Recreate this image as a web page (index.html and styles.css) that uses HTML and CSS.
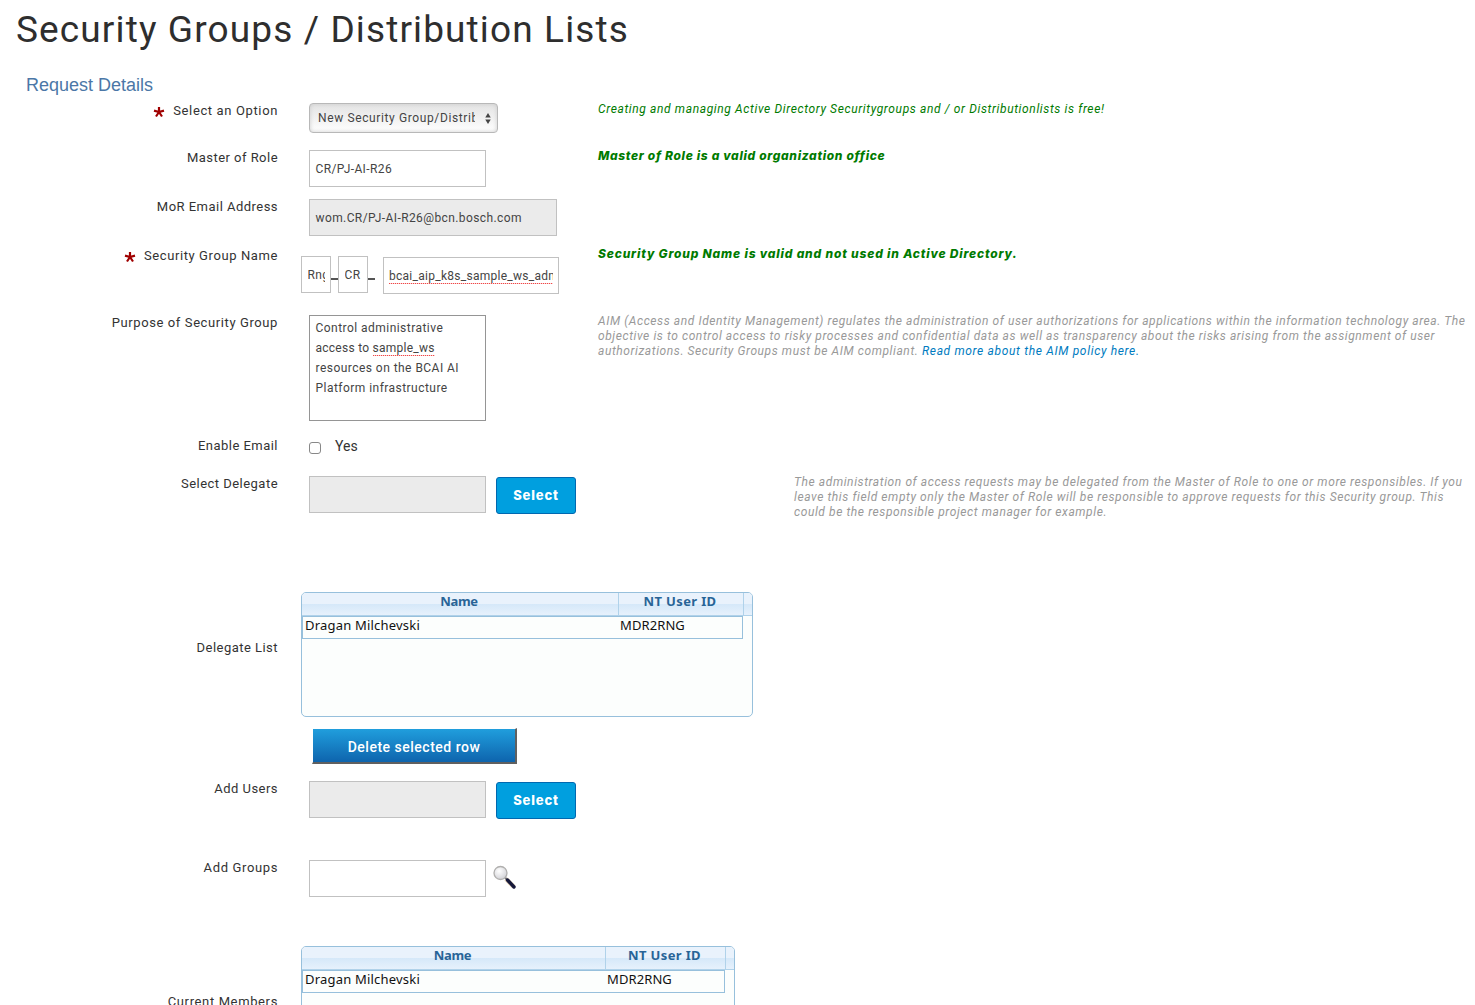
FILE: index.html
```html
<!DOCTYPE html>
<html lang="en">
<head>
<meta charset="utf-8">
<title>Security Groups / Distribution Lists</title>
<link rel="stylesheet" href="styles.css">
</head>
<body>
<h1 class="title">Security Groups / Distribution Lists</h1>
<h2 class="section">Request Details</h2>
<form class="form">
  <div class="row row--option">
    <div class="label"><svg class="star" viewBox="0 0 12 12"><path d="M6 6V1M6 6 1 4.600M6 6l5-1.400M6 6l-3 4.500M6 6l3 4.500"/></svg><span>Select an Option</span></div>
    <div class="field"><div class="select"><span class="select-text">New Security Group/Distrib</span><svg class="arrows" viewBox="0 0 6 12"><path d="M0 5 3 0l3 5zM0 7l3 5 3-5z"/></svg></div></div>
    <div class="hint hint--ok">Creating and managing Active Directory Securitygroups and / or Distributionlists is free!</div>
  </div>
  <div class="row row--role">
    <div class="label"><span>Master of Role</span></div>
    <div class="field"><div class="input">CR/PJ-AI-R26</div></div>
    <div class="hint hint--valid">Master of Role is a valid organization office</div>
  </div>
  <div class="row row--email">
    <div class="label"><span>MoR Email Address</span></div>
    <div class="field"><div class="input input--wide input--off">wom.CR/PJ-AI-R26@bcn.bosch.com</div></div>
  </div>
  <div class="row row--name">
    <div class="label"><svg class="star" viewBox="0 0 12 12"><path d="M6 6V1M6 6 1 4.600M6 6l5-1.400M6 6l-3 4.500M6 6l3 4.500"/></svg><span>Security Group Name</span></div>
    <div class="field field--name"><div class="input input--tiny"><span class="clip">Rng</span></div><i class="dash"></i><div class="input input--tiny"><span class="clip">CR</span></div><i class="dash"></i><div class="input input--group"><span class="clip"><span class="typo">bcai_aip_k8s_sample_ws_adm</span></span></div></div>
    <div class="hint hint--valid hint--name">Security Group Name is valid and not used in Active Directory.</div>
  </div>
  <div class="row row--purpose">
    <div class="label"><span>Purpose of Security Group</span></div>
    <div class="field"><div class="textarea">Control administrative<br><span class="tight">access to <span class="typo">sample_ws</span></span><br>resources on the BCAI AI<br>Platform infrastructure</div></div>
    <div class="hint">AIM (Access and Identity Management) regulates the administration of user authorizations for applications within the information technology area. The<br>objective is to control access to risky processes and confidential data as well as transparency about the risks arising from the assignment of user<br>authorizations. Security Groups must be AIM compliant. <a class="link">Read more about the AIM policy here.</a></div>
  </div>
  <div class="row row--enable">
    <div class="label"><span>Enable Email</span></div>
    <div class="field field--check"><span class="checkbox"></span><span class="yes">Yes</span></div>
  </div>
  <div class="row row--delegate">
    <div class="label"><span>Select Delegate</span></div>
    <div class="field"><div class="input input--off"></div><div class="btn">Select</div></div>
    <div class="hint hint--far">The administration of access requests may be delegated from the Master of Role to one or more responsibles. If you<br>leave this field empty only the Master of Role will be responsible to approve requests for this Security group. This<br>could be the responsible project manager for example.</div>
  </div>
  <div class="row row--list">
    <div class="label"><span>Delegate List</span></div>
    <div class="field field--table">
      <div class="grid"><div class="grid-head"><span class="c1">Name</span><span class="c2">NT User ID</span></div><div class="grid-row"><span class="c1">Dragan Milchevski</span><span class="c2">MDR2RNG</span></div></div>
    </div>
  </div>
  <div class="row row--delete">
    <div class="label"></div>
    <div class="field"><div class="delete">Delete selected row</div></div>
  </div>
  <div class="row row--users">
    <div class="label"><span>Add Users</span></div>
    <div class="field"><div class="input input--off"></div><div class="btn">Select</div></div>
  </div>
  <div class="row row--groups">
    <div class="label"><span>Add Groups</span></div>
    <div class="field"><div class="input"></div>
      <svg class="lens" viewBox="0 0 26 26"><defs><radialGradient id="glass" cx=".4" cy=".35" r=".7"><stop offset="0" stop-color="#fff"/><stop offset="1" stop-color="#cfcfd4"/></radialGradient></defs><path d="M14 15l8 8" stroke="#ead6bb" stroke-width="4.500"/><path d="M12.500 13l3 3" stroke="#777" stroke-width="2"/><path d="M15.500 16l6.500 7" stroke="#15183a" stroke-width="3.400" stroke-linecap="round"/><circle cx="8.500" cy="9" r="6.500" fill="url(#glass)" stroke="#b0afae" stroke-width="1.300"/></svg></div>
  </div>
  <div class="row row--members">
    <div class="label"><span>Current Members</span></div>
    <div class="field field--table">
      <div class="grid grid--members"><div class="grid-head"><span class="c1">Name</span><span class="c2">NT User ID</span></div><div class="grid-row"><span class="c1">Dragan Milchevski</span><span class="c2">MDR2RNG</span></div></div>
    </div>
  </div>
</form>
</body>
</html>
```
FILE: styles.css
```css
* { box-sizing: border-box; }
body { margin: 0; height: 1005px; overflow: hidden; background: #fff; color: #333; font-family: Roboto, sans-serif; font-size: 13px; }
.title { margin: 0; padding: 8px 0 0 16px; height: 75px; font-size: 37px; line-height: 43px; font-weight: 400; letter-spacing: 1.13px; white-space: nowrap; color: #2e2e2e; }
.section { margin: 0; padding-left: 26px; height: 28px; font: 400 18px/20px "Liberation Sans", sans-serif; color: #4b77a7; }
.form { height: 902px; overflow: hidden; }
.row { display: grid; grid-template-columns: 278px 320px 1fr; align-items: start; }
.row--option { height: 47px; }
.row--role { height: 49px; }
.row--email { height: 49px; }
.row--name { height: 67px; }
.row--purpose { height: 123px; }
.row--enable { height: 38px; }
.row--delegate { height: 116px; }
.row--list { height: 136px; }
.row--delete { height: 53px; }
.row--users { height: 79px; }
.row--groups { height: 86px; }
.row--members { height: 59px; }
.label { display: flex; justify-content: flex-end; line-height: 16px; white-space: nowrap; letter-spacing: .47px; }
.row--option .label, .row--groups .label, .row--members .label { letter-spacing: .63px; }
.row--name .label, .row--purpose .label { letter-spacing: .6px; }
.row--list .label, .row--members .label { padding-top: 48px; }
.star { width: 12px; height: 12px; margin: 3px 8px 0 0; fill: none; stroke: #a00000; stroke-width: 2.2; }
.field { display: flex; padding-left: 31px; }
.field--table { padding-left: 23px; }
.field--name { padding: 8px 0 0 23px; }
.field--check { padding-top: 4px; }
.input { display: flex; align-items: center; width: 177px; height: 37px; padding: 0 5px 0 5.5px; border: 1px solid #c1c1c1; background: #fff; color: #444; font-size: 12px; letter-spacing: .4px; white-space: nowrap; }
.input--wide { width: 248px; }
.input--off { background: #ebebeb; }
.input--tiny { width: 30px; }
.input--group { width: 176px; margin: 1px 0 0 8px; padding: 0 5px; letter-spacing: .27px; }
.clip { overflow: hidden; flex: 1; line-height: 18px; }
.dash { width: 7px; height: 2px; margin-top: 22px; background: #555; }
.typo { padding-bottom: 1px; background: repeating-linear-gradient(90deg, #f04848 0 1px, #fbd0d0 1px 2px) left bottom / 100% 1px no-repeat; }
.tight { letter-spacing: .26px; }
.select { display: flex; align-items: center; width: 189px; height: 30px; padding: 0 6px 0 8px; border: 1px solid #b8b8b8; border-radius: 4px; background: linear-gradient(#e3e3e3, #fff); box-shadow: inset 0 0 4px #ccc; color: #444; font-size: 12px; letter-spacing: .62px; }
.select-text { width: 157px; overflow: hidden; white-space: nowrap; line-height: 18px; }
.arrows { width: 6px; height: 11px; margin-left: auto; fill: #444; }
.textarea { width: 177px; height: 106px; padding: 2px 5.5px; border: 1px solid #959595; color: #444; font-size: 12px; letter-spacing: .46px; line-height: 20px; white-space: nowrap; }
.hint { margin-top: -1px; font-size: 12px; line-height: 15px; font-style: italic; color: #999; white-space: nowrap; letter-spacing: .585px; }
.hint--ok { color: #007a00; letter-spacing: .625px; }
.hint--valid { margin-top: -2px; color: #007a00; font-family: Inter, sans-serif; font-weight: 800; letter-spacing: .67px; }
.hint--name { letter-spacing: .82px; }
.hint--far { padding-left: 196px; letter-spacing: .59px; }
.link { color: #007bc0; letter-spacing: .66px; }
.checkbox { width: 12px; height: 12px; border: 1px solid #888; border-radius: 3px; }
.yes { margin: -4px 0 0 14px; font-size: 14px; line-height: 16px; }
.btn { width: 80px; height: 37px; margin: 1px 0 0 10px; border: 1px solid #0068b0; border-radius: 3px; background: #009fdf; color: #fff; font-family: Inter, sans-serif; font-weight: 800; font-size: 13px; letter-spacing: .85px; line-height: 35px; text-align: center; }
.grid { width: 452px; height: 125px; border: 1px solid #97c0dc; border-radius: 5px; background: #fcfefd; font-family: "Noto Sans", sans-serif; color: #111; font-size: 13px; letter-spacing: .2px; flex: none; }
.grid-head { display: flex; height: 23px; border-bottom: 1px solid #b0d2ea; border-radius: 4px 4px 0 0; background: linear-gradient(#e9f2fc 0 50%, #d5e8f9 50%, #e6f1fc); color: #286497; font-weight: 700; text-align: center; line-height: 17px; }
.grid-head .c1 { width: 317px; padding-right: 2px; border-right: 1px solid #b0d2ea; letter-spacing: -.3px; }
.grid-head .c2 { width: 125px; padding-right: 2px; border-right: 1px solid #b0d2ea; letter-spacing: .35px; }
.grid-row { display: flex; width: 441px; height: 23px; border: 1px solid #97c0dc; line-height: 17px; }
.grid-row .c1 { width: 315px; padding-left: 2px; }
.grid-row .c2 { padding-left: 2px; letter-spacing: .1px; }
.grid--members { width: 434px; }
.grid--members .grid-head .c1 { width: 304px; }
.grid--members .grid-head .c2 { width: 120px; }
.grid--members .grid-row { width: 423px; }
.grid--members .grid-row .c1 { width: 302px; }
.delete { width: 205px; height: 36px; margin-left: 3px; border-style: solid; border-width: 1px 2px 2px 1px; border-color: #fff #606060 #606060 #fff; background: linear-gradient(#209edd, #0e64ad) padding-box; color: #fff; font: 500 14px/36px Roboto, sans-serif; letter-spacing: .5px; text-align: center; }
.lens { width: 26px; height: 26px; margin: 4px 0 0 6px; }
```
